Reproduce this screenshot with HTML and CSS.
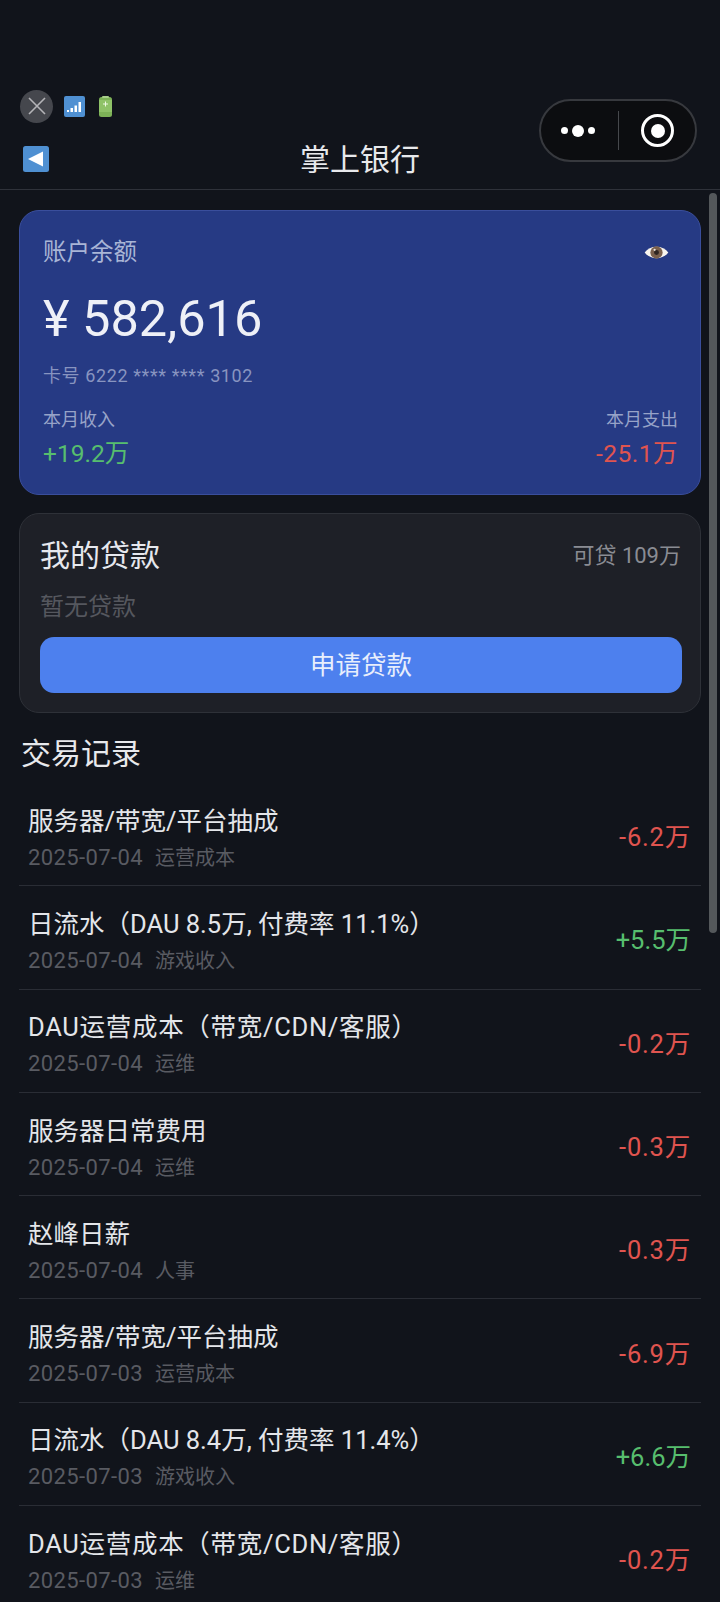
FILE: index.html
```html
<!DOCTYPE html>
<html lang="zh">
<head>
<meta charset="utf-8">
<title>掌上银行</title>
<link rel="stylesheet" href="styles.css">
</head>
<body>
<div class="app">
  <div class="top">
    <div class="status">
      <span class="close"><svg viewBox="0 0 32 32" width="32" height="32"><path d="M8 8 L24 24 M24 8 L8 24" stroke="#b4b4b8" stroke-width="1.6" fill="none"/></svg></span>
      <svg class="sig" viewBox="0 0 21 21" width="21" height="21"><rect width="21" height="21" rx="2" fill="#4f90d2"/><path d="M3 14h2v2H3zM6.500 12h2.500v4H6.500zM10.500 9.500h2.500V16h-2.500zM14.500 6h2.500v10h-2.500z" fill="#fff"/></svg>
      <svg class="bat" viewBox="0 0 15 21" width="15" height="21"><rect x="1" y="1" width="13" height="20" rx="2.500" fill="#7db257"/><rect x="4" y="0" width="7" height="2" rx="1" fill="#a9cf8b"/><rect x="1" y="4" width="13" height="12" fill="#8fc268"/><path d="M7 5.500h1v2h2v1H8v2H7v-2H5v-1h2z" fill="#eef8e2"/></svg>
    </div>
    <div class="nav">
      <svg class="back" viewBox="0 0 26 26" width="26" height="26"><rect width="26" height="26" rx="2.500" fill="#4f90d2"/><path d="M5 13 L20 5.500 V20.500 Z" fill="#fff"/></svg>
      <h1 class="title">掌上银行</h1>
    </div>
    <div class="capsule">
      <span class="dots"><i class="dot"></i><i class="dot big"></i><i class="dot"></i></span>
      <span class="sep"></span>
      <span class="target"><i></i></span>
    </div>
  </div>
  <main class="content">
    <section class="balance">
      <div class="bal-head"><span>账户余额</span><svg class="eye" viewBox="0 0 26 18" width="25" height="17"><path d="M0.500 9 C6 1 20 1 25.500 9 C20 17 6 17 0.500 9 Z" fill="#f7f4ee"/><circle cx="13" cy="9" r="6.500" fill="#7a604d"/><circle cx="13" cy="9" r="2.600" fill="#2e2420"/><circle cx="11" cy="6.200" r="1.200" fill="#ece6e0"/></svg></div>
      <div class="amount">¥ 582,616</div>
      <div class="card-no">卡号 6222 **** **** 3102</div>
      <div class="bal-foot">
        <div><div class="foot-label">本月收入</div><div class="foot-val up">+19.2万</div></div>
        <div class="right"><div class="foot-label">本月支出</div><div class="foot-val down">-25.1万</div></div>
      </div>
    </section>
    <section class="loan">
      <div class="loan-head"><span class="loan-title">我的贷款</span><span class="loan-avail">可贷 109万</span></div>
      <div class="loan-none">暂无贷款</div>
      <div class="loan-btn">申请贷款</div>
    </section>
    <h2 class="sec-title">交易记录</h2>
    <ul class="tx-list">
      <li class="tx"><div><div class="tx-name">服务器/带宽/平台抽成</div><div class="tx-meta"><span class="date">2025-07-04</span><span>运营成本</span></div></div><div class="tx-amt down">-6.2万</div></li>
      <li class="tx"><div><div class="tx-name">日流水（DAU 8.5万, 付费率 11.1%）</div><div class="tx-meta"><span class="date">2025-07-04</span><span>游戏收入</span></div></div><div class="tx-amt up">+5.5万</div></li>
      <li class="tx"><div><div class="tx-name wide">DAU运营成本（带宽/CDN/客服）</div><div class="tx-meta"><span class="date">2025-07-04</span><span>运维</span></div></div><div class="tx-amt down">-0.2万</div></li>
      <li class="tx"><div><div class="tx-name">服务器日常费用</div><div class="tx-meta"><span class="date">2025-07-04</span><span>运维</span></div></div><div class="tx-amt down">-0.3万</div></li>
      <li class="tx"><div><div class="tx-name">赵峰日薪</div><div class="tx-meta"><span class="date">2025-07-04</span><span>人事</span></div></div><div class="tx-amt down">-0.3万</div></li>
      <li class="tx"><div><div class="tx-name">服务器/带宽/平台抽成</div><div class="tx-meta"><span class="date">2025-07-03</span><span>运营成本</span></div></div><div class="tx-amt down">-6.9万</div></li>
      <li class="tx"><div><div class="tx-name">日流水（DAU 8.4万, 付费率 11.4%）</div><div class="tx-meta"><span class="date">2025-07-03</span><span>游戏收入</span></div></div><div class="tx-amt up">+6.6万</div></li>
      <li class="tx"><div><div class="tx-name wide">DAU运营成本（带宽/CDN/客服）</div><div class="tx-meta"><span class="date">2025-07-03</span><span>运维</span></div></div><div class="tx-amt down">-0.2万</div></li>
    </ul>
  </main>
  <div class="scrollbar"></div>
</div>
</body>
</html>
```
FILE: styles.css
```css
* { box-sizing: border-box; }
html, body { margin: 0; padding: 0; }
body {
  background: #11141b;
  font-family: Roboto, "Noto Sans CJK SC", sans-serif;
  color: #e6e8ee;
  width: 720px;
  height: 1602px;
  overflow: hidden;
}
.app { position: relative; width: 720px; height: 1602px; overflow: hidden; }
.top {
  position: relative;
  height: 190px;
  padding: 89px 0 0 20px;
  border-bottom: 1px solid #2f323a;
}
.status { display: flex; align-items: center; height: 34px; }
.close {
  width: 33px; height: 33px; border-radius: 50%;
  background: #45474d;
  display: flex; align-items: center; justify-content: center;
  margin-right: 11px;
}
.sig { margin-right: 13px; }
.nav { position: relative; display: flex; align-items: center; height: 48px; margin-top: 12px; padding-left: 3px; }
.back { display: block; }
.title {
  position: absolute; left: -20px; right: 0; top: 2px; margin: 0;
  text-align: center;
  font-size: 30px; font-weight: 400; line-height: 46px;
  color: #e8e9ec;
}
.capsule {
  position: absolute; left: 539px; top: 99px;
  width: 158px; height: 63px;
  border-radius: 32px;
  background: #0c0d10;
  border: 2px solid #37393e;
  display: flex; align-items: center;
}
.dots { display: flex; align-items: center; gap: 4px; margin-left: 20px; width: 47px; }
.dot { display: block; width: 7px; height: 7px; border-radius: 50%; background: #fff; flex: none; }
.dot.big { width: 12px; height: 12px; }
.sep { width: 1px; height: 39px; background: #46484c; margin-left: 10px; }
.target {
  width: 33px; height: 33px; border-radius: 50%;
  border: 3px solid #fff; margin-left: 22px;
  display: flex; align-items: center; justify-content: center;
}
.target i { display: block; width: 14px; height: 14px; border-radius: 50%; background: #fff; }
.content { padding: 20px 19px 0; width: 720px; }
.balance {
  height: 285px;
  background: #263a84;
  border: 1px solid #3a4e9c;
  border-radius: 20px;
  padding: 24px 22px 0 23px;
}
.bal-head { display: flex; justify-content: space-between; align-items: center; font-size: 23.500px; line-height: 34px; color: #a9b5d6; }
.eye { margin-right: 9px; }
.amount { font-size: 50.500px; line-height: 62px; margin-top: 19px; color: #eef0f7; font-weight: 400; }
.card-no { font-size: 18px; line-height: 26px; margin-top: 13px; color: #8894c0; letter-spacing: 0.600px; }
.bal-foot { display: flex; justify-content: space-between; margin-top: 18px; }
.right { text-align: right; }
.foot-label { font-size: 18px; line-height: 26px; color: #97a3c8; }
.foot-val { font-size: 24.500px; line-height: 34px; margin-top: 4px; }
.up { color: #57be6e; }
.down { color: #e0544f; }
.balance .down { letter-spacing: 0.500px; }
.loan {
  margin-top: 18px;
  height: 200px;
  background: #1e2027;
  border: 1px solid #2e3138;
  border-radius: 20px;
  padding: 18px 18px 0 20px;
}
.loan-head { display: flex; justify-content: space-between; align-items: center; height: 42px; }
.loan-title { font-size: 30px; color: #e6e8ee; }
.loan-avail { font-size: 22px; color: #8a8c93; margin-right: 1px; }
.loan-none { font-size: 24px; line-height: 34px; margin-top: 16px; color: #55575e; }
.loan-btn {
  margin-top: 13px; height: 56px; border-radius: 14px;
  background: #4d80ee; color: #e8eefc;
  font-size: 25.500px; line-height: 57px; text-align: center;
}
.sec-title { margin: 20px 0 0 2px; font-size: 30px; font-weight: 400; line-height: 42px; color: #e8e9ec; }
.tx-list { list-style: none; margin: 8px 0 0; padding: 0; }
.tx {
  height: 103.300px;
  display: flex; justify-content: space-between; align-items: center;
  padding: 6px 10px 0 9px;
  border-bottom: 1px solid #2a2d35;
}
.tx-name { font-size: 25.500px; line-height: 36px; color: #e4e6ea; }
.tx-name.wide { letter-spacing: 0.700px; }
.tx-meta { display: flex; gap: 12px; font-size: 20px; line-height: 28px; margin-top: 5px; color: #595b62; }
.date { font-size: 22px; letter-spacing: 0.400px; }
.tx-amt { font-size: 25.500px; line-height: 34px; }
.tx-amt.down { letter-spacing: 0.800px; }
.scrollbar {
  position: absolute; left: 709px; top: 193px;
  width: 8px; height: 740px;
  border-radius: 4px; background: #54585b;
}
```
